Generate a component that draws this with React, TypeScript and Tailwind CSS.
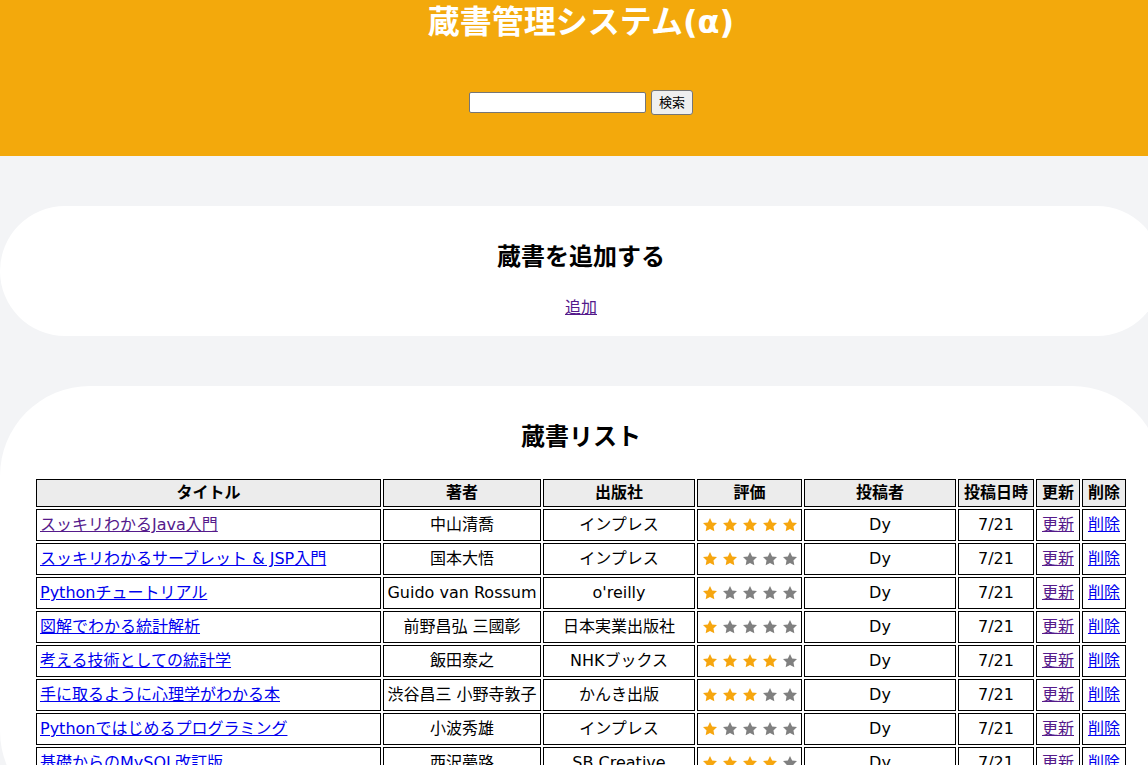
import React from "react";

type Book = {
  title: string;
  author: string;
  publisher: string;
  rating: number;
  visited?: boolean;
};

const books: Book[] = [
  { title: "スッキリわかるJava入門", author: "中山清喬", publisher: "インプレス", rating: 5, visited: true },
  { title: "スッキリわかるサーブレット & JSP入門", author: "国本大悟", publisher: "インプレス", rating: 2 },
  { title: "Pythonチュートリアル", author: "Guido van Rossum", publisher: "o'reilly", rating: 1 },
  { title: "図解でわかる統計解析", author: "前野昌弘 三國彰", publisher: "日本実業出版社", rating: 1 },
  { title: "考える技術としての統計学", author: "飯田泰之", publisher: "NHKブックス", rating: 4 },
  { title: "手に取るように心理学がわかる本", author: "渋谷昌三 小野寺敦子", publisher: "かんき出版", rating: 3 },
  { title: "Pythonではじめるプログラミング", author: "小波秀雄", publisher: "インプレス", rating: 1 },
  { title: "基礎からのMySQL改訂版", author: "西沢夢路", publisher: "SB Creative", rating: 4 },
];

function Star({ on }: { on: boolean }) {
  return (
    <svg viewBox="0 0 24 24" className={`w-[16px] h-[16px] ${on ? "fill-[#f6a60f]" : "fill-[#808080]"}`}>
      <path d="M12 1.5l3.2 6.6 7.3 1-5.3 5.1 1.3 7.2L12 18l-6.5 3.4 1.3-7.2L1.5 9.1l7.3-1z" />
    </svg>
  );
}

function Rating({ value }: { value: number }) {
  return (
    <div className="flex items-center justify-center gap-[4px]">
      {[1, 2, 3, 4, 5].map((i) => (
        <Star key={i} on={i <= value} />
      ))}
    </div>
  );
}

const th = "border border-black bg-[#ececec] font-bold leading-6 py-px px-[3px] text-center";
const td = "border border-black leading-6 py-[3px] px-[3px] text-center whitespace-nowrap";
const visitedLink = "text-[#551a8b] underline";
const link = "text-[#0000ee] underline";

export default function App() {
  return (
    <div className="w-full min-h-screen overflow-hidden bg-[#f3f4f6] text-black text-[16px] font-['DejaVu_Sans','Noto_Sans_CJK_JP',sans-serif]">
      <div className="w-[1162px]">
        {/* Header */}
        <header className="h-[156px] bg-[#f3a90c] text-center pt-[2px]">
          <h1 className="text-[32px] leading-[40px] font-bold text-white">蔵書管理システム(α)</h1>
          <div className="mt-[48px] flex items-center justify-center gap-[5px]">
            <input
              type="text"
              className="w-[177px] h-[21px] bg-white border border-[#767676] rounded-[2px] px-1 text-[13px]"
            />
            <button className="h-[25px] px-[7px] bg-[#efefef] border border-[#767676] rounded-[3px] text-[13px]">
              検索
            </button>
          </div>
        </header>

        <main className="pt-[50px] flex flex-col gap-[50px]">
          {/* Add */}
          <section className="bg-white rounded-[90px] h-[130px] pt-[35px] text-center">
            <h2 className="text-[24px] leading-8 font-bold">蔵書を追加する</h2>
            <a href="#" className={`inline-block mt-[23px] leading-6 ${visitedLink}`}>
              追加
            </a>
          </section>

          {/* List */}
          <section className="bg-white rounded-[90px] pt-[35px] pb-[40px] text-center">
            <h2 className="text-[24px] leading-8 font-bold mb-[24px]">蔵書リスト</h2>
            <table className="w-[1094px] mx-auto table-fixed border-separate border-spacing-[2px]">
              <thead>
                <tr>
                  <th className={`${th} w-[345px]`}>タイトル</th>
                  <th className={`${th} w-[158px]`}>著者</th>
                  <th className={`${th} w-[152px]`}>出版社</th>
                  <th className={`${th} w-[105px]`}>評価</th>
                  <th className={`${th} w-[152px]`}>投稿者</th>
                  <th className={`${th} w-[76px]`}>投稿日時</th>
                  <th className={`${th} w-[44px]`}>更新</th>
                  <th className={`${th} w-[44px]`}>削除</th>
                </tr>
              </thead>
              <tbody>
                {books.map((b) => (
                  <tr key={b.title}>
                    <td className={`${td} text-left`}>
                      <a href="#" className={b.visited ? visitedLink : link}>
                        {b.title}
                      </a>
                    </td>
                    <td className={td}>{b.author}</td>
                    <td className={td}>{b.publisher}</td>
                    <td className={td}>
                      <Rating value={b.rating} />
                    </td>
                    <td className={td}>Dy</td>
                    <td className={td}>7/21</td>
                    <td className={td}>
                      <a href="#" className={visitedLink}>更新</a>
                    </td>
                    <td className={td}>
                      <a href="#" className={link}>削除</a>
                    </td>
                  </tr>
                ))}
              </tbody>
            </table>
          </section>
        </main>
      </div>
    </div>
  );
}
